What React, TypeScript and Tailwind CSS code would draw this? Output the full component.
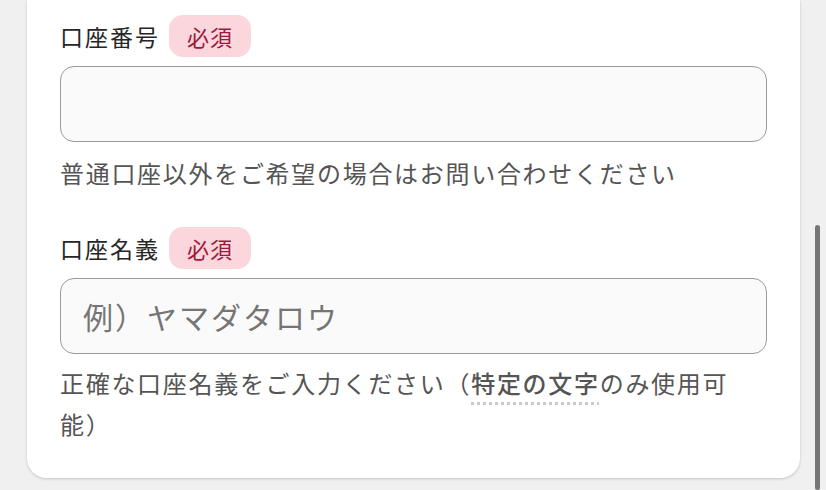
const font = { fontFamily: '"Noto Sans CJK JP", "Noto Sans", sans-serif' };

function RequiredBadge() {
  return (
    <span className="inline-flex h-[42px] items-center rounded-[14px] bg-[#fcd6dd] px-[18px] text-[22px] tracking-[1px] text-[#9e1a3d]">
      必須
    </span>
  );
}

function FieldLabel({ children }: { children: React.ReactNode }) {
  return (
    <div className="flex items-center gap-[9px]">
      <span className="text-[23px] tracking-[2px] text-[#262626]">{children}</span>
      <RequiredBadge />
    </div>
  );
}

function TextInput({ placeholder }: { placeholder?: string }) {
  return (
    <input
      type="text"
      placeholder={placeholder}
      className="mt-[9px] block h-[76px] w-full rounded-[14px] border border-[#9a9a9a] bg-[#fafafa] pl-[22px] text-[30px] tracking-[2px] text-[#333333] outline-none placeholder:text-[#757575]"
      style={font}
    />
  );
}

export default function App() {
  return (
    <div className="relative min-h-[490px] bg-[#f0f0f0]" style={font}>
      <div className="ml-[27px] w-[773px] rounded-b-[20px] bg-white px-[33px] pt-[15px] pb-[34px] shadow-[0_1px_3px_rgba(0,0,0,0.18)]">
        <div>
          <FieldLabel>口座番号</FieldLabel>
          <TextInput />
          <p className="mt-[10px] text-[24px] leading-[41px] tracking-[1.7px] text-[#555555]">
            普通口座以外をご希望の場合はお問い合わせください
          </p>
        </div>

        <div className="mt-[34px]">
          <FieldLabel>口座名義</FieldLabel>
          <TextInput placeholder="例）ヤマダタロウ" />
          <p className="mt-[8px] text-[24px] leading-[41px] tracking-[1.7px] text-[#555555]">
            正確な口座名義をご入力ください（
            <span className="font-medium underline decoration-[#cacaca] decoration-dotted decoration-[3px] underline-offset-[9px]">
              特定の文字
            </span>
            のみ使用可能）
          </p>
        </div>
      </div>

      {/* scrollbar thumb */}
      <div className="absolute top-[225px] right-[6px] bottom-0 w-[5px] rounded-full bg-[#767676]" />
    </div>
  );
}
